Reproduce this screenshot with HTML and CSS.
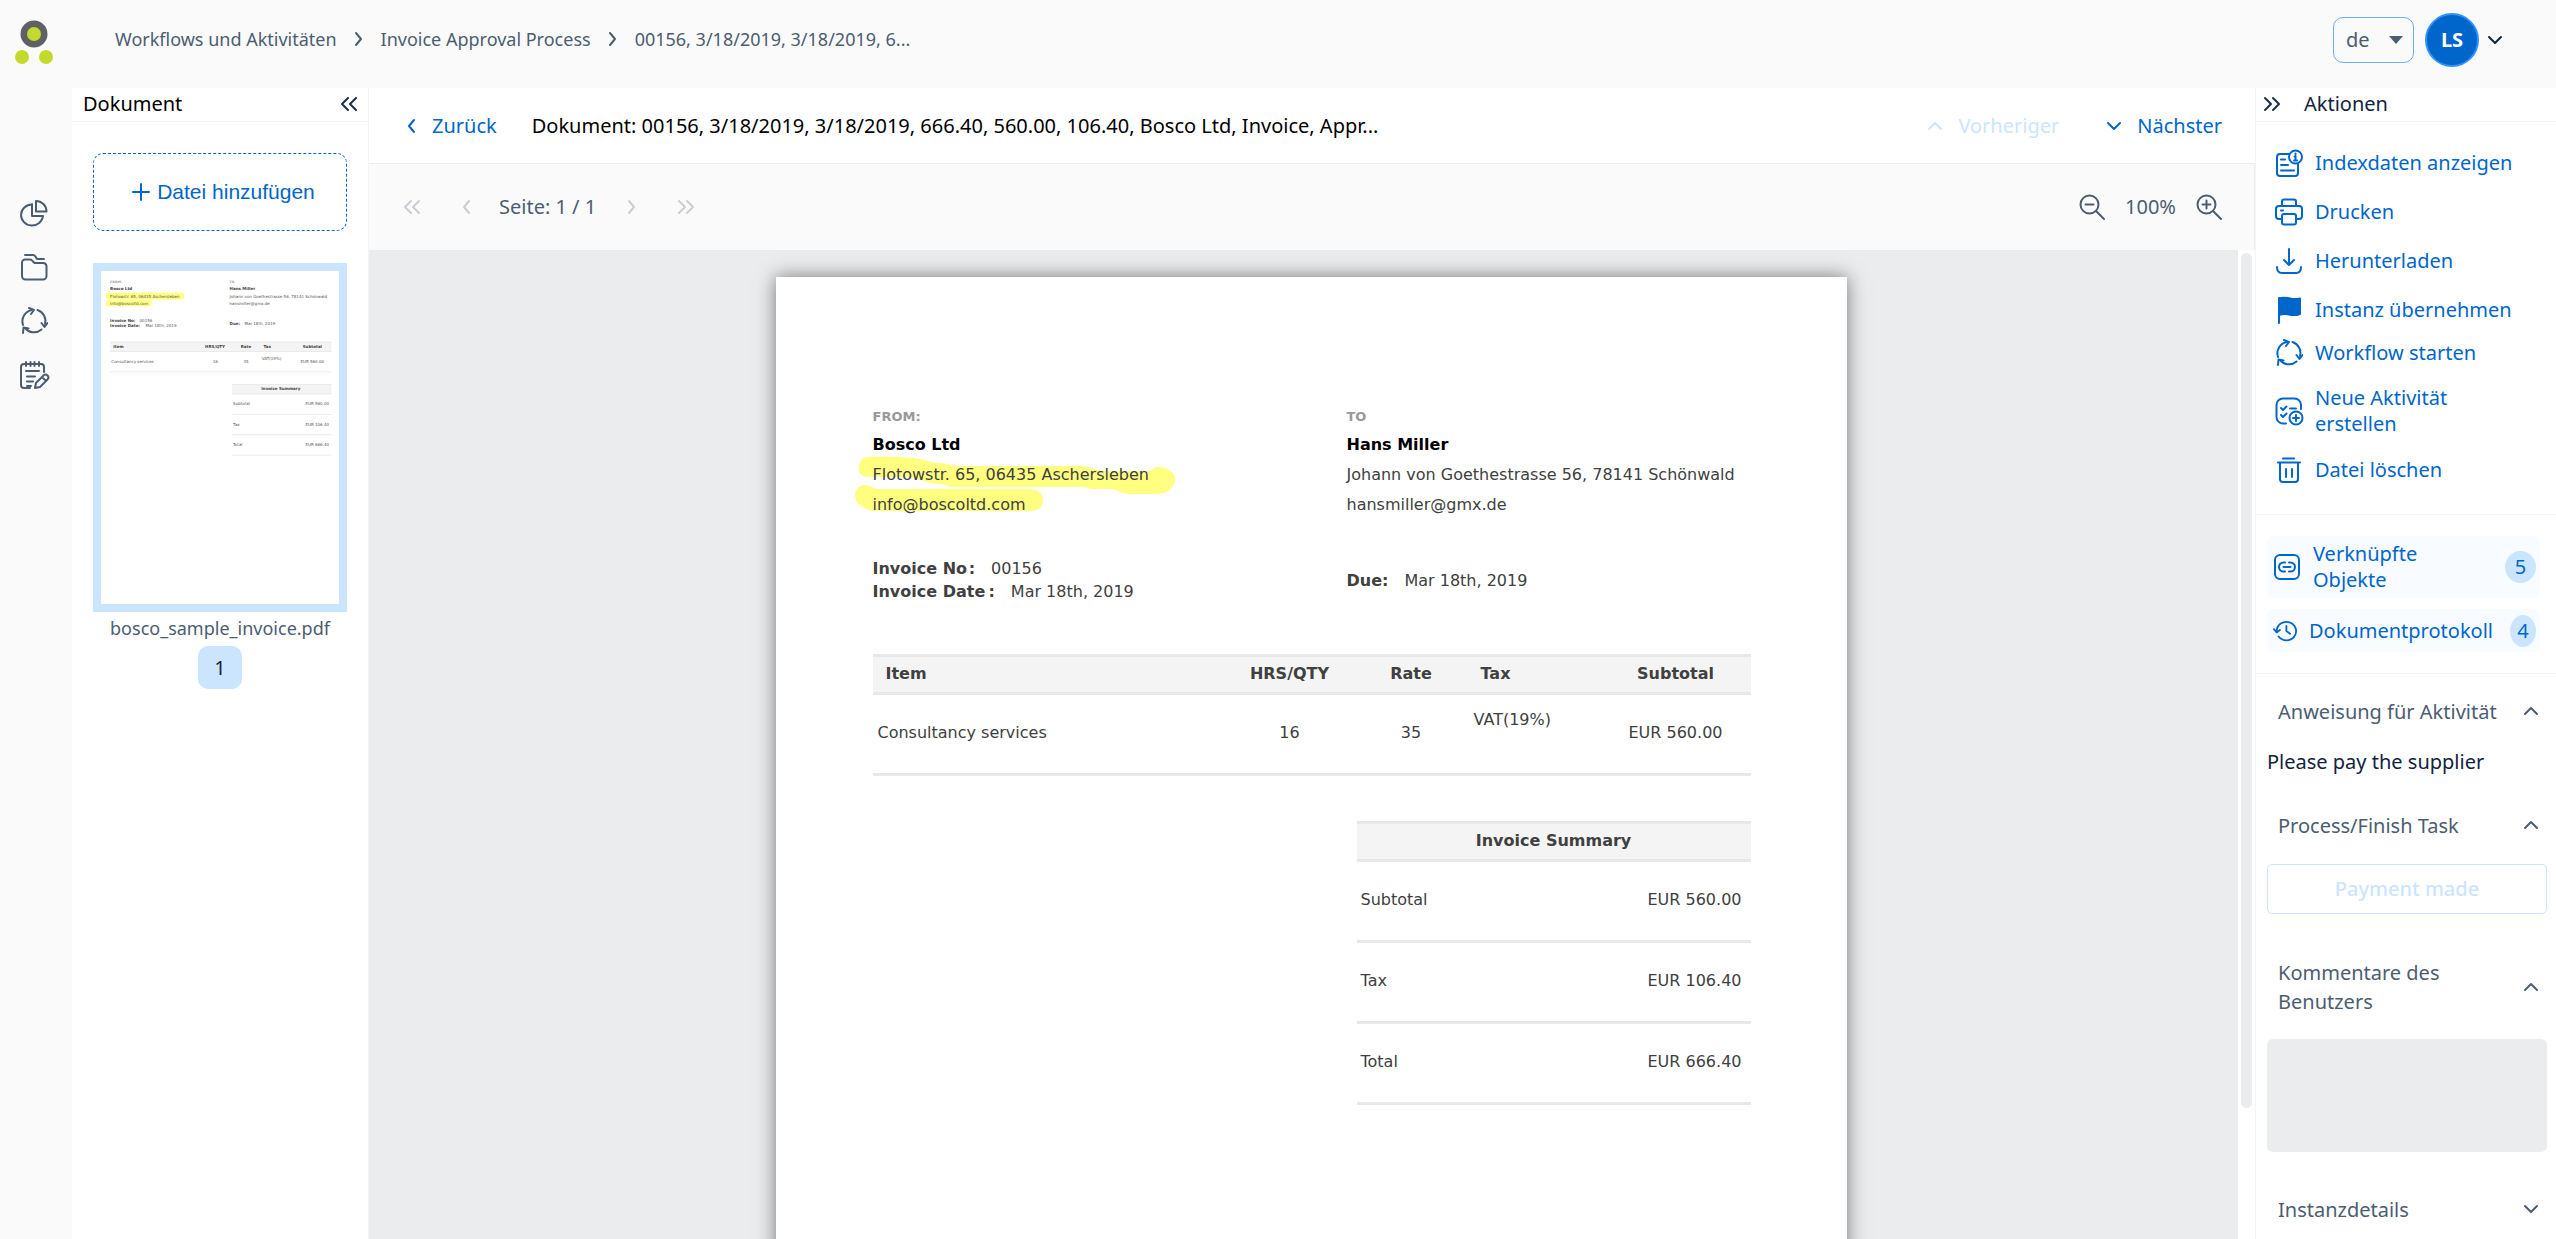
FILE: index.html
```html
<!DOCTYPE html>
<html lang="de">
<head>
<meta charset="utf-8">
<title>Dokument 00156</title>
<link rel="stylesheet" href="styles.css">
</head>
<body>
<svg class="sprite" aria-hidden="true">
  <symbol id="left" viewBox="0 0 12 20"><path d="M9 4 4 10l5 6"/></symbol>
  <symbol id="right" viewBox="0 0 12 20"><path d="m3 4 5 6-5 6"/></symbol>
  <symbol id="first" viewBox="0 0 20 20"><path d="m9 4-6 6 6 6M17 4l-6 6 6 6"/></symbol>
  <symbol id="last" viewBox="0 0 20 20"><path d="m3 4 6 6-6 6M11 4l6 6-6 6"/></symbol>
  <symbol id="up" viewBox="0 0 16 16"><path d="m2 11 6-6 6 6"/></symbol>
  <symbol id="down" viewBox="0 0 16 16"><path d="m2 5 6 6 6-6"/></symbol>
  <symbol id="cycle" viewBox="0 0 28 28">
    <path d="M3 18A11.500 11.500 0 0 1 12 3M17.500 3A11.500 11.500 0 0 1 25 17M21.500 22.500A11.500 11.500 0 0 1 5 21"/>
    <path d="m9 1 5 2-3 4M21.500 16l3 4 3-4M3 26l.500-5.500 5 1"/>
  </symbol>
</svg>

<div class="app">
  <header class="topbar">
    <a class="logo" href="#" aria-label="Startseite">
      <svg width="34" height="46" viewBox="0 0 34 46">
        <circle cx="17" cy="14" r="13.500" fill="#5f6164"/><circle cx="17" cy="14" r="7" fill="#c4d92e"/>
        <circle cx="5" cy="37" r="7" fill="#c4d92e"/><circle cx="29" cy="37" r="7" fill="#c4d92e"/>
      </svg>
    </a>
    <nav class="crumbs" aria-label="Pfad">
      <a href="#">Workflows und Aktivitäten</a>
      <svg class="icon" width="12" height="20"><use href="#right"/></svg>
      <a href="#">Invoice Approval Process</a>
      <svg class="icon" width="12" height="20"><use href="#right"/></svg>
      <a href="#">00156, 3/18/2019, 3/18/2019, 6...</a>
    </nav>
    <div class="account">
      <div class="lang">
        <select aria-label="Sprache"><option>de</option><option>en</option></select>
        <svg class="lang-arrow" width="14" height="9" viewBox="0 0 14 9"><path d="M0 0h14L7 8z" fill="#4c5d70"/></svg>
      </div>
      <button class="user" type="button" aria-label="Benutzermenü">
        <span class="avatar">LS</span>
        <svg class="icon" width="16" height="16"><use href="#down"/></svg>
      </button>
    </div>
  </header>

  <div class="body">
    <nav class="rail" aria-label="Hauptmenü">
      <a href="#" aria-label="Dashboard"><svg class="icon" width="28" height="28" viewBox="0 0 28 28"><path d="M12 5v12h11A11 10.500 0 1 1 12 5.500z"/><path d="M16 2v10.500h10.500A10.500 10.500 0 0 0 16 2z"/></svg></a>
      <a href="#" aria-label="Dokumente"><svg class="icon" width="28" height="28" viewBox="0 0 28 28"><path d="M2 9.500a3 3 0 0 1 3-3h5q1.500 0 2.500 1.500l2 2H23a3.500 3.500 0 0 1 3.500 3V23a3.500 3.500 0 0 1-3.500 3.500H5.500A3.500 3.500 0 0 1 2 23z"/><path d="M5 2h8q1.500 0 2.500 1.500L17 6h7"/></svg></a>
      <a href="#" aria-label="Workflows"><svg class="icon" width="28" height="28"><use href="#cycle"/></svg></a>
      <a href="#" aria-label="Aufgaben"><svg class="icon" width="30" height="28" viewBox="0 0 30 28"><path d="M25 11V6a3 3 0 0 0-3-3H5a3 3 0 0 0-3 3v18a3 3 0 0 0 3 3h6M7 1v4M11.500 1v4M15.500 1v4M20 1v4M7 10h13M8 15.500h8M8 20.500h6M8 25h4"/><path d="M16 27l1-5 7.500-7.500a2.800 2.800 0 0 1 4 4L21 26zM23 16l4 4"/></svg></a>
    </nav>

    <aside class="docs">
      <div class="panel-head">
        <h2>Dokument</h2>
        <button type="button" aria-label="Einklappen"><svg class="icon" width="20" height="20"><use href="#first"/></svg></button>
      </div>
      <button class="add-file" type="button">
        <svg class="icon" width="18" height="18" viewBox="0 0 18 18"><path d="M9 1v16M1 9h16"/></svg>
        Datei hinzufügen
      </button>
      <a class="thumb" href="#" aria-label="Seite 1">
        <svg viewBox="61 96 944 1321">
          <g fill="#ffff80"><rect x="80" y="182" width="312" height="27" rx="13"/><rect x="80" y="212" width="182" height="24" rx="12"/></g>
          <g fill="#f4f4f4"><path d="M97 377h878v40H97zM581 544h394v41H581z"/></g>
          <g fill="#e6e6e6"><path d="M97 377h878v3H97zM97 414h878v3H97zM97 495h878v3H97zM581 544h394v3H581zM581 582h394v3H581zM581 663h394v3H581zM581 744h394v3H581zM581 825h394v3H581z"/></g>
          <g class="t-bold">
            <text x="97" y="172">Bosco Ltd</text><text x="571" y="172">Hans Miller</text>
            <text x="97" y="297">Invoice No:</text><text x="97" y="320">Invoice Date:</text><text x="571" y="309">Due:</text>
            <text x="110" y="401">Item</text><text x="474" y="401">HRS/QTY</text><text x="615" y="401">Rate</text><text x="706" y="401">Tax</text><text x="861" y="401">Subtotal</text>
            <text x="697" y="570">Invoice Summary</text>
          </g>
          <g class="t-small"><text x="97" y="143">FROM:</text><text x="571" y="143">TO</text></g>
          <g class="t-text">
            <text x="97" y="203">Flotowstr. 65, 06435 Aschersleben</text><text x="97" y="232">info@boscoltd.com</text>
            <text x="571" y="203">Johann von Goethestrasse 56, 78141 Schönwald</text><text x="571" y="232">hansmiller@gmx.de</text>
            <text x="214" y="297">00156</text><text x="238" y="320">Mar 18th, 2019</text><text x="630" y="309">Mar 18th, 2019</text>
            <text x="102" y="461">Consultancy services</text><text x="504" y="461">16</text><text x="626" y="461">35</text><text x="699" y="448">VAT(19%)</text><text x="852" y="461">EUR 560.00</text>
            <text x="585" y="628">Subtotal</text><text x="872" y="628">EUR 560.00</text>
            <text x="585" y="709">Tax</text><text x="872" y="709">EUR 106.40</text>
            <text x="585" y="790">Total</text><text x="872" y="790">EUR 666.40</text>
          </g>
        </svg>
      </a>
      <p class="file-name">bosco_sample_invoice.pdf</p>
      <button class="page-badge" type="button">1</button>
    </aside>

    <main class="viewer">
      <div class="doc-bar">
        <a class="link back" href="#"><svg class="icon" width="12" height="20"><use href="#left"/></svg>Zurück</a>
        <h1>Dokument: 00156, 3/18/2019, 3/18/2019, 666.40, 560.00, 106.40, Bosco Ltd, Invoice, Appr...</h1>
        <div class="steps">
          <button class="link" type="button" disabled><svg class="icon" width="16" height="16"><use href="#up"/></svg>Vorheriger</button>
          <button class="link" type="button"><svg class="icon" width="16" height="16"><use href="#down"/></svg>Nächster</button>
        </div>
      </div>
      <div class="page-bar">
        <div class="pager">
          <button type="button" disabled aria-label="Erste Seite"><svg class="icon" width="20" height="20"><use href="#first"/></svg></button>
          <button type="button" disabled aria-label="Vorherige Seite"><svg class="icon" width="12" height="20"><use href="#left"/></svg></button>
          <span>Seite: 1 / 1</span>
          <button type="button" disabled aria-label="Nächste Seite"><svg class="icon" width="12" height="20"><use href="#right"/></svg></button>
          <button type="button" disabled aria-label="Letzte Seite"><svg class="icon" width="20" height="20"><use href="#last"/></svg></button>
        </div>
        <div class="zoom">
          <button type="button" aria-label="Verkleinern"><svg class="icon" width="26" height="26" viewBox="0 0 26 26"><circle cx="10.500" cy="10.500" r="9"/><path d="m17 17 8 8M6.500 10.500h8"/></svg></button>
          <span>100%</span>
          <button type="button" aria-label="Vergrößern"><svg class="icon" width="26" height="26" viewBox="0 0 26 26"><circle cx="10.500" cy="10.500" r="9"/><path d="m17 17 8 8M6.500 10.500h8M10.500 6.500v8"/></svg></button>
        </div>
      </div>
      <div class="stage">
        <div class="canvas">
          <article class="paper">
            <div class="parties">
              <div class="party">
                <svg class="marker" width="320" height="56" viewBox="0 0 320 56" aria-hidden="true">
                  <path d="M14 1C30 0 50 1 64 3c8 1 14 4 20 4 7 0 12 3 20 3h122c8 0 14 5 26 5h40c6 0 6-4 11-4 8 0 17 4 17 12 0 10-10 15-18 15h-28c-8 0-12-5-20-5h-16c-4 0-6-2-10-2H98c-6 0-8-3-14-3-12 0-18-6-34-7H14C-1 22 1 1 14 1z"/>
                  <path d="M10 29c6 0 8 4 14 4h148c9 0 16 3 16 11 0 8-6 11-12 11H20C12 55 0 48 0 40c0-6 4-11 10-11z"/>
                </svg>
                <p class="label">FROM:</p>
                <p class="name">Bosco Ltd</p>
                <p>Flotowstr. 65, 06435 Aschersleben</p>
                <p>info@boscoltd.com</p>
              </div>
              <div class="party">
                <p class="label">TO</p>
                <p class="name">Hans Miller</p>
                <p>Johann von Goethestrasse 56, 78141 Schönwald</p>
                <p>hansmiller@gmx.de</p>
              </div>
            </div>
            <div class="facts">
              <div>
                <p><b>Invoice No&#8202;:</b><span>00156</span></p>
                <p><b>Invoice Date&#8201;:</b><span>Mar 18th, 2019</span></p>
              </div>
              <p><b>Due:</b><span>Mar 18th, 2019</span></p>
            </div>
            <table class="items">
              <colgroup><col class="c-item"><col class="c-qty"><col class="c-rate"><col class="c-tax"><col class="c-sub"></colgroup>
              <thead><tr><th class="item">Item</th><th>HRS/QTY</th><th>Rate</th><th class="tax">Tax</th><th>Subtotal</th></tr></thead>
              <tbody><tr><td class="item">Consultancy services</td><td>16</td><td>35</td><td class="tax">VAT(19%)</td><td>EUR 560.00</td></tr></tbody>
            </table>
            <table class="summary">
              <thead><tr><th colspan="2">Invoice Summary</th></tr></thead>
              <tbody>
                <tr><td>Subtotal</td><td>EUR 560.00</td></tr>
                <tr><td>Tax</td><td>EUR 106.40</td></tr>
                <tr><td>Total</td><td>EUR 666.40</td></tr>
              </tbody>
            </table>
          </article>
        </div>
        <div class="scroll"><div class="scroll-thumb"></div></div>
      </div>
    </main>

    <aside class="actions">
      <div class="panel-head">
        <button type="button" aria-label="Einklappen"><svg class="icon" width="20" height="20"><use href="#last"/></svg></button>
        <h2>Aktionen</h2>
      </div>
      <div class="action-list">
        <button class="action" type="button"><svg class="icon" width="28" height="28" viewBox="0 0 28 28"><path d="M14 5H5a3 3 0 0 0-3 3v16a3 3 0 0 0 3 3h15a3 3 0 0 0 3-3v-9M6 10.500h4M6 16h7M6 21.500h13"/><circle cx="20.500" cy="8" r="6.500"/><path d="M20.500 7v4.500M20.500 4.500v1M19 11.500h3M19.500 7.500h1"/></svg>Indexdaten anzeigen</button>
        <button class="action" type="button"><svg class="icon" width="28" height="28" viewBox="0 0 28 28"><path d="M7 8V3.500A2 2 0 0 1 9 1.500h10a2 2 0 0 1 2 2V8M7 21H4a3 3 0 0 1-3-3v-7a3 3 0 0 1 3-3h20a3 3 0 0 1 3 3v7a3 3 0 0 1-3 3h-3M6 12.500h2"/><rect x="7" y="16" width="14" height="10.500" rx="2"/></svg>Drucken</button>
        <button class="action" type="button"><svg class="icon" width="28" height="28" viewBox="0 0 28 28"><path d="M14 2v16M9 13l5 5 5-5M2 20c0 4 2 6 5 6h14c3 0 5-2 5-6"/></svg>Herunterladen</button>
        <button class="action" type="button"><svg class="icon" width="28" height="28" viewBox="0 0 28 28"><path d="M4 2v25"/><path d="M4 2.500c4-1.500 7-1 11 0s6 1 10 0V18c-4 1.500-7 1.500-11 .500s-6-1-10 .500z" fill="currentColor"/></svg>Instanz übernehmen</button>
        <button class="action short" type="button"><svg class="icon" width="28" height="28"><use href="#cycle"/></svg>Workflow starten</button>
        <button class="action tall" type="button"><svg class="icon" width="28" height="28" viewBox="0 0 28 28"><path d="M26 12V8a6.500 6.500 0 0 0-6.500-6.500H8A6.500 6.500 0 0 0 1.500 8v12A6.500 6.500 0 0 0 8 26.500h3M6 11l2 2 3.500-3.500M6 18l2 2 3.500-3.500M15 11.500h6"/><circle cx="21" cy="21" r="6.500"/><path d="M18 21h6M21 18v6"/></svg>Neue Aktivität<br>erstellen</button>
        <button class="action short" type="button"><svg class="icon" width="28" height="28" viewBox="0 0 28 28"><path d="M8 2.500h11M3 6.500h22M5 7v16a3 3 0 0 0 3 3h12a3 3 0 0 0 3-3V7M11 13v8M17 13v8"/></svg>Datei löschen</button>
      </div>
      <div class="related">
        <button class="chip" type="button"><svg class="icon" width="28" height="28" viewBox="0 0 28 28"><rect x="2" y="2" width="24" height="24" rx="5"/><path d="M12 9.500h-1.500a4.500 4.500 0 0 0 0 9H12M16 9.500h1.500a4.500 4.500 0 0 1 0 9H16M10.500 14h7"/></svg><span>Verknüpfte Objekte</span><b class="count">5</b></button>
        <button class="chip slim" type="button"><svg class="icon" width="24" height="24" viewBox="0 0 26 26"><path d="M4 13.500V13A10.500 10 0 1 1 6 19M1 11l3 3.500L7.500 12M14.500 7.500V13l4 3"/></svg><span>Dokumentprotokoll</span><b class="count">4</b></button>
      </div>
      <section class="fold instruction">
        <button class="fold-head" type="button"><span>Anweisung für Aktivität</span><svg class="icon" width="16" height="16"><use href="#up"/></svg></button>
        <p class="note">Please pay the supplier</p>
      </section>
      <section class="fold finish">
        <button class="fold-head" type="button"><span>Process/Finish Task</span><svg class="icon" width="16" height="16"><use href="#up"/></svg></button>
        <button class="pay" type="button" disabled>Payment made</button>
      </section>
      <section class="fold comments">
        <button class="fold-head" type="button"><span>Kommentare des Benutzers</span><svg class="icon" width="16" height="16"><use href="#up"/></svg></button>
        <textarea class="comment" aria-label="Kommentare des Benutzers"></textarea>
      </section>
      <section class="fold">
        <button class="fold-head" type="button"><span>Instanzdetails</span><svg class="icon" width="16" height="16"><use href="#down"/></svg></button>
      </section>
    </aside>
  </div>
</div>
</body>
</html>
```
FILE: styles.css
```css
* { box-sizing: border-box; }

body {
  margin: 0;
  background: #fafafa;
  color: #4c5d70;
  font: 20px/26px "Noto Sans", "Open Sans", sans-serif;
}

h1, h2, p { margin: 0; font-size: inherit; font-weight: 400; }
a { color: inherit; text-decoration: none; }
button, select, textarea { margin: 0; padding: 0; border: 0; background: none; color: inherit; font: inherit; }
.sprite { position: absolute; width: 0; height: 0; }
svg { display: block; flex: none; }
.icon { fill: none; stroke: currentColor; stroke-width: 2; stroke-linecap: round; stroke-linejoin: round; overflow: visible; }

.app { display: flex; flex-direction: column; height: 100vh; overflow: hidden; }

/* Top bar */
.topbar { display: flex; height: 88px; flex: none; align-items: flex-start; }
.logo { width: 72px; flex: none; padding: 20px 0 0 17px; }
.logo svg { overflow: visible; }
.crumbs { display: flex; align-items: center; gap: 16px; height: 78px; padding-left: 43px; font-size: 18px; }
.account { display: flex; align-items: center; gap: 11px; height: 80px; margin-left: auto; padding-right: 53px; }
.lang { position: relative; width: 81px; height: 46px; }
.lang select { width: 100%; height: 100%; padding-left: 12px; border: 1px solid #66b0ff; border-radius: 10px; appearance: none; }
.lang-arrow { position: absolute; right: 11px; top: 19px; pointer-events: none; }
.user { display: flex; align-items: center; gap: 8px; color: #10243e; }
.avatar { display: grid; place-items: center; width: 54px; height: 54px; border: 2px solid #3391ff; border-radius: 50%; background: #0066cc; color: #fff; font-weight: 700; }

/* Columns */
.body { display: flex; flex: 1; min-height: 0; }
.rail { display: flex; flex-direction: column; align-items: center; gap: 26px; width: 72px; flex: none; padding: 111px 4px 0 0; }

.panel-head { display: flex; align-items: center; height: 34px; padding-bottom: 2px; border-bottom: 1px solid #f3f4f5; }
.panel-head button { color: #1c2f48; }

/* Document list */
.docs { display: flex; flex-direction: column; align-items: center; width: 297px; flex: none; border-right: 1px solid #f3f4f5; background: #fff; }
.docs .panel-head { width: 100%; justify-content: space-between; padding-left: 11px; padding-right: 9px; color: #000; }
.add-file { display: flex; align-items: center; justify-content: center; gap: 7px; width: 254px; height: 78px; margin-top: 31px; padding-left: 7px; border: 1px dashed #0066cc; border-radius: 10px; color: #0066cc; font: 21px/26px "Liberation Sans", Arial, sans-serif; }
.thumb { width: 254px; margin-top: 32px; padding: 8px; background: #cce5ff; }
.thumb svg { width: 100%; background: #fff; font-family: "DejaVu Sans", sans-serif; font-size: 16px; }
.t-bold { font-weight: 700; fill: #404040; }
.t-small { font-size: 13px; font-weight: 700; fill: #999; }
.t-text { fill: #555; }
.file-name { margin-top: 3px; font-size: 18px; }
.page-badge { width: 44px; height: 43px; margin-top: 5px; border-radius: 10px; background: #cce5ff; color: #10243e; }

/* Viewer */
.viewer { display: flex; flex-direction: column; flex: 1; min-width: 0; background: #fff; }
.link { display: flex; align-items: center; gap: 15px; color: #0066cc; }
.link:disabled { color: #cce5ff; }
.doc-bar { display: flex; align-items: center; height: 76px; flex: none; padding: 0 33px 0 36px; border-bottom: 1px solid #ebecee; }
.doc-bar h1 { margin-left: 35px; color: #000; white-space: nowrap; }
.steps { display: flex; gap: 47px; margin-left: auto; }
.page-bar { display: flex; align-items: center; justify-content: space-between; height: 86px; flex: none; padding: 0 32px; border-right: 1px solid #ebecee; background: #fafafa; }
.pager { display: flex; align-items: center; }
.pager button { display: grid; place-items: center; width: 22px; color: #c8ced4; }
.pager button + button { margin-left: 32px; }
.pager span { margin: 0 25px 0 22px; }
.zoom { display: flex; align-items: center; gap: 20px; }
.stage { display: flex; flex: 1; min-height: 0; }
.canvas { display: flex; justify-content: center; flex: 1; padding: 27px 0 0 15px; overflow: hidden; background: #ebecee; }
.scroll { width: 17px; flex: none; padding: 3px; }
.scroll-thumb { height: 87%; border-radius: 6px; background: #ebecee; }

/* Invoice */
.paper { width: 1071px; height: 1500px; flex: none; padding: 127px 96px 0 97px; background: #fff; box-shadow: 0 0 18px rgba(0, 0, 0, .5); color: #404040; font: 16px/30px "DejaVu Sans", sans-serif; }
.parties, .facts { display: grid; grid-template-columns: 474px 1fr; }
.party { position: relative; white-space: nowrap; }
.party p { position: relative; }
.marker { position: absolute; left: -18px; top: 52px; fill: #ffff80; }
.label { color: #999; font-size: 13px; font-weight: 700; line-height: 26px; }
.name { color: #000; font-weight: 700; }
.facts { align-items: center; margin-top: 37px; line-height: 23px; }
.facts span { margin-left: 16px; }
table { border-spacing: 0; table-layout: fixed; line-height: 20px; }
th { height: 41px; padding: 0 0 2px; border: solid #e8e8e8; border-width: 3px 0; background: #f4f4f4; }
td { height: 81px; padding: 0 0 3px; border-bottom: 3px solid #e8e8e8; text-align: center; }
.items { width: 100%; margin-top: 51px; }
.c-item { width: 352px; }
.c-qty { width: 130px; }
.c-rate { width: 113px; }
.c-tax { width: 133px; }
.items .item { padding-left: 5px; text-align: left; }
.items th.item { padding-left: 13px; }
.items .tax { padding-left: 6px; text-align: left; }
.items th.tax { padding-left: 13px; }
.items td.tax { padding-top: 15px; vertical-align: top; }
.summary { width: 394px; margin: 45px 0 0 auto; }
.summary td { padding-left: 4px; text-align: left; }
.summary td + td { padding-right: 9px; text-align: right; }

/* Actions */
.actions { width: 301px; flex: none; border-left: 1px solid #f3f4f5; background: #fff; }
.actions .panel-head { gap: 22px; padding-left: 6px; color: #10243e; }
.action-list { padding: 16px 0 26px 19px; border-bottom: 1px solid #f3f4f5; color: #0066cc; }
.action { display: flex; align-items: center; gap: 12px; width: 100%; height: 49px; text-align: left; }
.action.short { height: 37px; }
.action.tall { height: 80px; }
.related { display: flex; flex-direction: column; gap: 11px; padding: 21px 16px 21px 11px; border-bottom: 1px solid #f3f4f5; color: #0066cc; }
.chip { display: flex; align-items: center; gap: 12px; height: 62px; padding: 0 4px 0 6px; border-radius: 6px; background: #f8fbff; text-align: left; }
.chip span { flex: 1; }
.chip.slim { height: 43px; }
.count { display: grid; place-items: center; width: 31px; height: 32px; border-radius: 50%; background: #cce5ff; font-weight: 400; }
.slim .count { width: 26px; }
.fold { padding: 0 9px 0 11px; }
.instruction { padding-bottom: 12px; }
.finish { padding-bottom: 36px; }
.comments { padding-bottom: 20px; }
.fold-head { display: flex; align-items: center; justify-content: space-between; width: 100%; min-height: 74px; padding: 0 8px 0 11px; line-height: 29px; text-align: left; }
.fold-head span { max-width: 236px; }
.note { line-height: 28px; color: #10243e; }
.pay { width: 100%; height: 50px; margin-top: 2px; border: 1px solid #cce5ff; border-radius: 5px; color: #cce5ff; font-weight: 500; }
.comment { display: block; width: 100%; height: 113px; margin-top: 15px; border-radius: 6px; background: #ebecee; resize: none; }
```
